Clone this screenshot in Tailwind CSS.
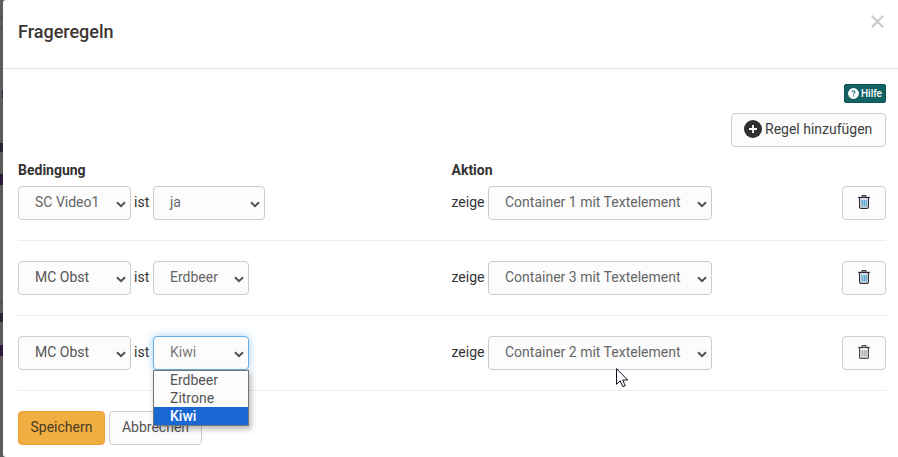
<!DOCTYPE html>
<html lang="de">
<head>
<meta charset="utf-8">
<title>Frageregeln</title>
<script src="https://cdn.jsdelivr.net/npm/@tailwindcss/browser@4"></script>
</head>
<body class="h-[457px] w-[898px] overflow-hidden bg-[#5e5e5e] font-[Roboto,sans-serif] text-[14px] leading-5 text-[#333]">
<svg class="hidden">
  <symbol id="chev" viewBox="0 0 10 7"><path d="M1 1.3 5 5.2 9 1.3" fill="none" stroke="#505050" stroke-width="2"/></symbol>
  <symbol id="trash" viewBox="0 0 12 14"><path d="M4 2V1.4Q4 .6 4.8.6H7.2Q8 .6 8 1.4V2" fill="none" stroke="currentColor" stroke-width="1.1"/><path d="M.2 2.5H11.8" stroke="currentColor" stroke-width="1.3"/><path d="M1.6 2.8V12Q1.6 13.4 3 13.4H9Q10.4 13.4 10.4 12V2.8" fill="none" stroke="currentColor" stroke-width="1.2"/></symbol>
</svg>
<div class="flex h-full">
  <div class="flex w-[3px] shrink-0 flex-col overflow-hidden bg-[#5c5c5c]">
    <div class="h-[18px] border-b border-[#4a4a4a]"></div>
    <div class="h-[11px] border-b border-[#4a4a4a]"></div>
    <div class="mt-[61px] h-[8px] w-[3px] border-r border-[#262b4a]"></div>
    <div class="mt-[45px] h-[9px] bg-[#2d2338]"></div>
    <div class="mt-[22px] h-[11px] bg-[#2d1838]"></div>
    <div class="mt-[117px] h-[1px] bg-[#4a4a4a]"></div>
    <div class="mt-[10px] h-[9px] bg-[#2d2338]"></div>
    <div class="mt-[23px] h-[11px] bg-[#2d1838]"></div>
  </div>
  <main class="flex h-full w-[895px] shrink-0 flex-col rounded-l-[3px] bg-white">
    <header class="flex h-[69px] shrink-0 justify-between border-b border-[#e0e0e0] pl-[15px] pr-[14px]">
      <h1 class="mt-[20px] text-[18px] font-medium leading-6 text-[#3c3732]">Frageregeln</h1>
      <svg class="mt-[15px] h-[13px] w-[13px]" viewBox="0 0 13 13"><path d="M.8.8 12.2 12.2M12.2.8.8 12.2" stroke="#c8c8c8" stroke-width="2.1"/></svg>
    </header>
    <div class="flex flex-col items-end pr-3 pt-[15px]">
      <div class="flex h-[19px] w-[42px] items-center gap-[2px] rounded-[2px] border border-[#0b5355] bg-[#126163] pl-[3px] text-[10px] font-medium leading-none text-white">
        <svg class="h-[11px] w-[11px] shrink-0" viewBox="0 0 11 11"><circle cx="5.5" cy="5.5" r="5.4" fill="#fff"/><path d="M4 4.2Q4.1 2.9 5.5 2.9T7 4.2Q7 4.9 6.1 5.3 5.5 5.6 5.5 6.4M5.5 7.2V8.4" fill="none" stroke="#337b7d" stroke-width="1.1"/></svg>
        <span>Hilfe</span>
      </div>
      <div class="mt-[10px] flex h-[34px] w-[155px] items-center rounded-[4px] border border-[#ccc] bg-[#fcfcfc] pl-[12px] text-[#3f3f3f]">
        <svg class="mr-[3px] -mt-[2px] h-[18px] w-[18px] shrink-0" viewBox="0 0 18 18"><circle cx="9" cy="9" r="9" fill="#2e2e2e"/><path d="M9 5V13M5 9H13" stroke="#fff" stroke-width="1.8"/></svg>
        <span class="-mt-[2px] whitespace-nowrap">Regel hinzufügen</span>
      </div>
    </div>
    <div class="ml-[15px] mt-[13px] flex h-[26px] w-[868px] font-bold">
      <div class="w-[433.5px]">Bedingung</div><div>Aktion</div>
    </div>
    <section class="ml-[15px] flex h-[55px] w-[868px] shrink-0 border-b border-[#eee]">
      <div class="flex h-[34px] w-[433.5px]">
        <div class="flex w-[113px] items-center justify-between rounded-[4px] border border-[#ccc] bg-[#fcfcfc] pb-[2px] pl-4 pr-1 text-[#666]"><span>SC Video1</span><svg class="mt-1 h-[7px] w-[10px]"><use href="#chev"/></svg></div>
        <span class="w-[22px] pl-[3px] pt-[6px]">ist</span>
        <div class="flex w-[112px] items-center justify-between rounded-[4px] border border-[#ccc] bg-[#fcfcfc] pb-[2px] pl-4 pr-1 text-[#666]"><span>ja</span><svg class="mt-1 h-[7px] w-[10px]"><use href="#chev"/></svg></div>
      </div>
      <span class="w-[36.5px] pt-[6px]">zeige</span>
      <div class="flex h-[34px] w-[224px] items-center justify-between rounded-[4px] border border-[#ccc] bg-[#fcfcfc] pb-[2px] pl-4 pr-1 text-[#666]"><span>Container 1 mit Textelement</span><svg class="mt-1 h-[7px] w-[10px]"><use href="#chev"/></svg></div>
      <div class="ml-auto flex h-[34px] w-[44px] items-center justify-center rounded-[4px] border border-[#ccc] bg-[#fcfcfc] pb-[2px] text-[#2d2a35]"><svg class="h-[14px] w-[12px]" viewBox="0 0 12 14"><path d="M3 4H9V12H3Z" fill="#c8e6f8"/><path d="M4.1 5V11.7M6.2 5V11.7M8.2 5V11.7" stroke="#3989b8" stroke-width="1"/><use href="#trash" width="12" height="14"/></svg></div>
    </section>
    <section class="ml-[15px] flex h-[75px] w-[868px] shrink-0 border-b border-[#eee] pt-5">
      <div class="flex h-[34px] w-[433.5px]">
        <div class="flex w-[113px] items-center justify-between rounded-[4px] border border-[#ccc] bg-[#fcfcfc] pb-[2px] pl-4 pr-1 text-[#555]"><span>MC Obst</span><svg class="mt-1 h-[7px] w-[10px]"><use href="#chev"/></svg></div>
        <span class="w-[22px] pl-[3px] pt-[6px]">ist</span>
        <div class="flex w-[96px] items-center justify-between rounded-[4px] border border-[#ccc] bg-[#fcfcfc] pb-[2px] pl-4 pr-1 text-[#666]"><span>Erdbeer</span><svg class="mt-1 h-[7px] w-[10px]"><use href="#chev"/></svg></div>
      </div>
      <span class="w-[36.5px] pt-[6px]">zeige</span>
      <div class="flex h-[34px] w-[224px] items-center justify-between rounded-[4px] border border-[#ccc] bg-[#fcfcfc] pb-[2px] pl-4 pr-1 text-[#666]"><span>Container 3 mit Textelement</span><svg class="mt-1 h-[7px] w-[10px]"><use href="#chev"/></svg></div>
      <div class="ml-auto flex h-[34px] w-[44px] items-center justify-center rounded-[4px] border border-[#ccc] bg-[#fcfcfc] pb-[2px] text-[#2d2a35]"><svg class="h-[14px] w-[12px]" viewBox="0 0 12 14"><path d="M3 4H9V12H3Z" fill="#c8e6f8"/><path d="M4.1 5V11.7M6.2 5V11.7M8.2 5V11.7" stroke="#3989b8" stroke-width="1"/><use href="#trash" width="12" height="14"/></svg></div>
    </section>
    <section class="ml-[15px] flex h-[75px] w-[868px] shrink-0 border-b border-[#eee] pt-5">
      <div class="flex h-[34px] w-[433.5px]">
        <div class="flex w-[113px] items-center justify-between rounded-[4px] border border-[#ccc] bg-[#fcfcfc] pb-[2px] pl-4 pr-1 text-[#555]"><span>MC Obst</span><svg class="mt-1 h-[7px] w-[10px]"><use href="#chev"/></svg></div>
        <span class="w-[22px] pl-[3px] pt-[6px]">ist</span>
        <div class="relative flex w-[96px] items-center justify-between rounded-[4px] border border-[#66afe9] bg-[#fcfcfc] pb-[2px] pl-4 pr-1 text-[#777] shadow-[0_0_8px_rgba(102,175,233,0.6)]"><span>Kiwi</span><svg class="mt-1 h-[7px] w-[10px]"><use href="#chev"/></svg>
          <ul class="absolute -left-px top-[33px] z-10 h-[56px] w-[96px] border border-[#767676] bg-[#fcfcfc] leading-[18px] text-[#555] shadow-[2px_3px_6px_rgba(0,0,0,0.3)]">
            <li class="h-[18px] pl-4">Erdbeer</li>
            <li class="h-[18px] pl-4">Zitrone</li>
            <li class="h-[18px] bg-[#1967d2] pl-4 font-medium text-white">Kiwi</li>
          </ul>
        </div>
      </div>
      <span class="w-[36.5px] pt-[6px]">zeige</span>
      <div class="relative flex h-[34px] w-[224px] items-center justify-between rounded-[4px] border border-[#ccc] bg-[#fcfcfc] pb-[2px] pl-4 pr-1 text-[#666]"><span>Container 2 mit Textelement</span><svg class="mt-1 h-[7px] w-[10px]"><use href="#chev"/></svg>
        <svg class="absolute left-[127px] top-[31px] h-[20px] w-[13px]" viewBox="0 0 13 20"><path d="M.5.7V16.3L4.2 12.8 6.8 18.7 9.2 17.7 6.7 12H11.7Z" fill="#fff" stroke="#101020" stroke-width="1"/></svg>
      </div>
      <div class="ml-auto flex h-[34px] w-[44px] items-center justify-center rounded-[4px] border border-[#ccc] bg-[#fcfcfc] pb-[2px] text-[#444]"><svg class="h-[14px] w-[12px]" viewBox="0 0 12 14"><path d="M4.1 5V11.7M6.1 5V11.7M8.1 5V11.7" stroke="#888" stroke-width="1"/><use href="#trash" width="12" height="14"/></svg></div>
    </section>
    <footer class="flex gap-1 pl-[15px] pt-5">
      <div class="flex h-[34px] w-[87px] items-center justify-center rounded-[4px] border border-[#eea236] bg-[#f0ad41] pb-[2px] text-[#4a3b22]">Speichern</div>
      <div class="flex h-[34px] w-[93px] items-center justify-center rounded-[4px] border border-[#ccc] bg-[#fcfcfc] pb-[2px] text-[#555]">Abbrechen</div>
    </footer>
  </main>
</div>
</body>
</html>
